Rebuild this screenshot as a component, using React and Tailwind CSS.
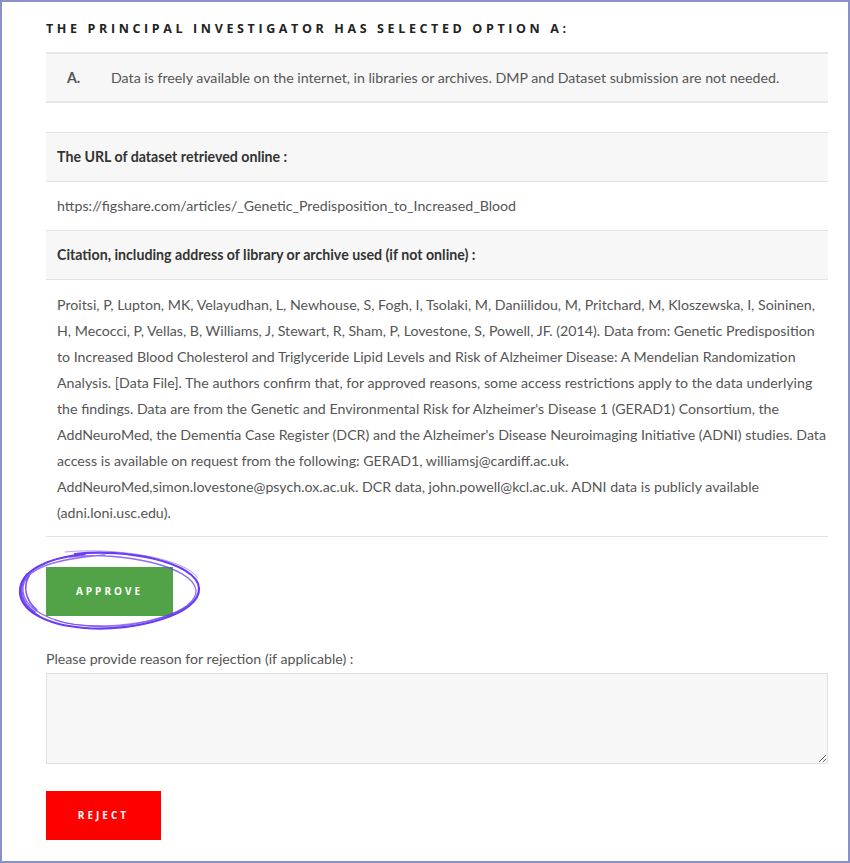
import React from "react";

const citation = [
  "Proitsi, P, Lupton, MK, Velayudhan, L, Newhouse, S, Fogh, I, Tsolaki, M, Daniilidou, M, Pritchard, M, Kloszewska, I, Soininen,",
  "H, Mecocci, P, Vellas, B, Williams, J, Stewart, R, Sham, P, Lovestone, S, Powell, JF. (2014). Data from: Genetic Predisposition",
  "to Increased Blood Cholesterol and Triglyceride Lipid Levels and Risk of Alzheimer Disease: A Mendelian Randomization",
  "Analysis. [Data File]. The authors confirm that, for approved reasons, some access restrictions apply to the data underlying",
  "the findings. Data are from the Genetic and Environmental Risk for Alzheimer's Disease 1 (GERAD1) Consortium, the",
  "AddNeuroMed, the Dementia Case Register (DCR) and the Alzheimer's Disease Neuroimaging Initiative (ADNI) studies. Data",
  "access is available on request from the following: GERAD1, williamsj@cardiff.ac.uk.",
  "AddNeuroMed,simon.lovestone@psych.ox.ac.uk. DCR data, john.powell@kcl.ac.uk. ADNI data is publicly available",
  "(adni.loni.usc.edu).",
];

const Scribble = () => (
  <svg
    className="absolute pointer-events-none"
    style={{ left: -31, top: -19 }}
    width="190"
    height="88"
    viewBox="0 0 190 88"
    fill="none"
  >
    <g stroke="#6a3cf2" strokeLinecap="round" fill="none">
      <path d="M60 6 C 110 0, 182 14, 184 40 C 186 66, 120 84, 70 80 C 30 77, 4 62, 5 42 C 6 24, 30 10, 70 6" strokeWidth="2.2" />
      <path d="M55 9 C 105 3, 178 18, 181 42 C 183 64, 125 81, 75 78 C 35 76, 7 60, 8 40 C 9 22, 35 11, 90 7" strokeWidth="1.3" opacity="0.75" />
      <path d="M50 4 C 100 -1, 170 10, 183 30" strokeWidth="1" opacity="0.5" />
      <path d="M10 30 C 4 40, 6 55, 20 64 M8 34 C 3 44, 8 58, 24 68 M14 28 C 8 38, 10 52, 22 62 M12 26 C 5 36, 4 50, 14 60" strokeWidth="1.6" opacity="0.85" />
      <path d="M40 72 C 70 82, 130 80, 170 60" strokeWidth="1.2" opacity="0.6" />
    </g>
  </svg>
);

export default function App() {
  return (
    <div
      className="w-[850px] h-[863px] border-2 border-[#8a91c9] bg-white text-[#555] overflow-hidden"
      style={{ fontFamily: "Lato, 'Open Sans', sans-serif" }}
    >
      <div className="pl-[44px] pr-[20px] pt-[19px]">
        <h2
          className="text-[12.5px] font-bold tracking-[0.29em] text-[#222] leading-[16px] whitespace-nowrap"
          style={{ fontFamily: "'Open Sans', sans-serif" }}
        >
          THE PRINCIPAL INVESTIGATOR HAS SELECTED OPTION A:
        </h2>

        <div className="mt-[15px] w-[782px] h-[51px] bg-[#f7f7f7] border-y-2 border-[#e6e6e6] flex items-center text-[14.2px] text-[#555]">
          <span className="w-[65px] pl-[21px] font-bold">A.</span>
          <span className="whitespace-nowrap">
            Data is freely available on the internet, in libraries or archives. DMP and Dataset submission are not needed.
          </span>
        </div>

        <div className="mt-[29px] w-[782px] border-y border-[#e3e3e3] text-[14.2px]">
          <div className="h-[49px] bg-[#f7f7f7] px-[11px] flex items-center font-bold text-[#333] border-b border-[#e3e3e3]">
            The URL of dataset retrieved online :
          </div>
          <div className="h-[49px] px-[11px] flex items-center border-b border-[#e3e3e3]">
            https://figshare.com/articles/_Genetic_Predisposition_to_Increased_Blood
          </div>
          <div className="h-[49px] bg-[#f7f7f7] px-[11px] flex items-center font-bold text-[#333] border-b border-[#e3e3e3]">
            Citation, including address of library or archive used (if not online) :
          </div>
          <div className="px-[11px] pt-[12px] pb-[10px] leading-[26px]">
            {citation.map((line, i) => (
              <div key={i} className="whitespace-nowrap">{line}</div>
            ))}
          </div>
        </div>

        <div className="mt-[30px] relative w-[127px]">
          <button
            className="w-[127px] h-[49px] bg-[#52a347] text-white text-[10px] font-bold tracking-[0.3em] flex items-center justify-center"
            style={{ fontFamily: "'Open Sans', sans-serif" }}
          >
            APPROVE
          </button>
          <Scribble />
        </div>

        <label className="block mt-[34px] text-[14.2px] text-[#555] leading-[18px]">
          Please provide reason for rejection (if applicable) :
        </label>
        <textarea className="block mt-[5px] w-[782px] h-[91px] bg-[#f7f7f7] border border-[#e0e0e0] resize-y" />

        <button
          className="mt-[27px] w-[115px] h-[49px] bg-[#ff0000] text-white text-[10px] font-bold tracking-[0.3em] flex items-center justify-center"
          style={{ fontFamily: "'Open Sans', sans-serif" }}
        >
          REJECT
        </button>
      </div>
    </div>
  );
}
